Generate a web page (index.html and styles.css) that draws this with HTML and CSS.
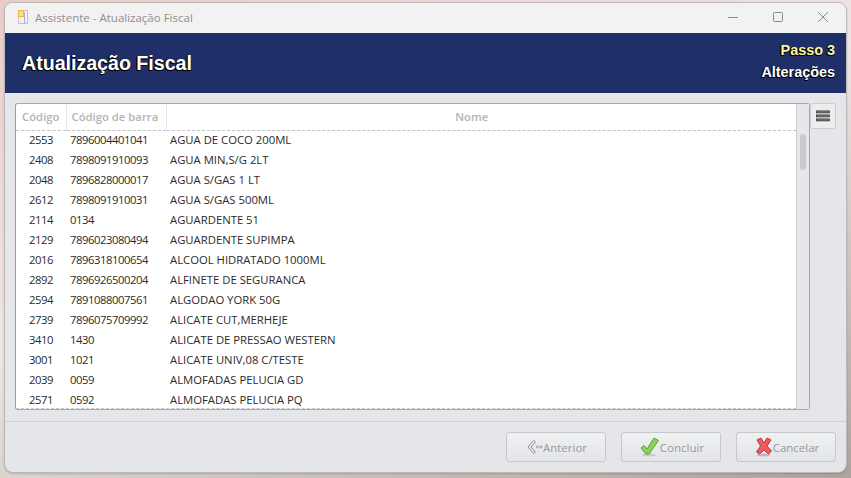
FILE: index.html
```html
<!DOCTYPE html>
<html lang="pt-BR">
<head>
    <meta charset="UTF-8">
    <meta name="viewport" content="width=device-width, initial-scale=1.0">
    <title>Assistente - Atualização Fiscal</title>
    <link rel="stylesheet" href="styles.css">
</head>
<body>
    <div class="window">
        <div class="titlebar">
            <svg class="app-icon" width="16" height="16" viewBox="0 0 16 16">
                <rect x="3.5" y="1.5" width="9" height="13" fill="#f3eef8" stroke="#c9bcdc"/>
                <rect x="3.5" y="1.5" width="5" height="6" fill="#fbe08a" stroke="#f0b92e"/>
                <rect x="9" y="3" width="1" height="11" fill="#b7a8d0"/>
            </svg>
            <span class="window-title">Assistente - Atualização Fiscal</span>
            <div class="window-controls">
                <svg width="12" height="12" viewBox="0 0 12 12"><path d="M1 6.5h10" stroke="#8a8a8a" fill="none"/></svg>
                <svg width="12" height="12" viewBox="0 0 12 12"><rect x="1.5" y="1.5" width="9" height="9" rx="1" stroke="#8a8a8a" fill="none"/></svg>
                <svg width="12" height="12" viewBox="0 0 12 12"><path d="M1 1l10 10M11 1L1 11" stroke="#8a8a8a" fill="none"/></svg>
            </div>
        </div>

        <div class="banner">
            <h1>Atualização Fiscal</h1>
            <div class="step">
                <div class="step-number">Passo 3</div>
                <div class="step-name">Alterações</div>
            </div>
        </div>

        <div class="content">
            <div class="grid-panel">
                <div class="grid-main">
                    <table class="grid">
                        <thead>
                            <tr>
                                <th class="col-code">Código</th>
                                <th class="col-bar">Código de barra</th>
                                <th class="col-name">Nome</th>
                            </tr>
                        </thead>
                        <tbody>
                            <tr><td class="col-code">2553</td><td class="col-bar">7896004401041</td><td>AGUA DE COCO 200ML</td></tr>
                            <tr><td class="col-code">2408</td><td class="col-bar">7898091910093</td><td>AGUA MIN,S/G 2LT</td></tr>
                            <tr><td class="col-code">2048</td><td class="col-bar">7896828000017</td><td>AGUA S/GAS 1 LT</td></tr>
                            <tr><td class="col-code">2612</td><td class="col-bar">7898091910031</td><td>AGUA S/GAS 500ML</td></tr>
                            <tr><td class="col-code">2114</td><td class="col-bar">0134</td><td>AGUARDENTE 51</td></tr>
                            <tr><td class="col-code">2129</td><td class="col-bar">7896023080494</td><td>AGUARDENTE SUPIMPA</td></tr>
                            <tr><td class="col-code">2016</td><td class="col-bar">7896318100654</td><td>ALCOOL HIDRATADO 1000ML</td></tr>
                            <tr><td class="col-code">2892</td><td class="col-bar">7896926500204</td><td>ALFINETE DE SEGURANCA</td></tr>
                            <tr><td class="col-code">2594</td><td class="col-bar">7891088007561</td><td>ALGODAO YORK 50G</td></tr>
                            <tr><td class="col-code">2739</td><td class="col-bar">7896075709992</td><td>ALICATE CUT,MERHEJE</td></tr>
                            <tr><td class="col-code">3410</td><td class="col-bar">1430</td><td>ALICATE DE PRESSAO WESTERN</td></tr>
                            <tr><td class="col-code">3001</td><td class="col-bar">1021</td><td>ALICATE UNIV,08 C/TESTE</td></tr>
                            <tr><td class="col-code">2039</td><td class="col-bar">0059</td><td>ALMOFADAS PELUCIA GD</td></tr>
                            <tr><td class="col-code">2571</td><td class="col-bar">0592</td><td>ALMOFADAS PELUCIA PQ</td></tr>
                        </tbody>
                    </table>
                </div>
                <div class="scrollbar"><div class="scroll-thumb"></div></div>
            </div>
            <button class="menu-btn" aria-label="Menu">
                <svg width="14" height="12" viewBox="0 0 14 12">
                    <rect x="0.4" y="0.9" width="13.2" height="2" fill="#7a7d80" stroke="#2e2e2e" stroke-width="0.7"/>
                    <rect x="0.4" y="4.9" width="13.2" height="2" fill="#7a7d80" stroke="#2e2e2e" stroke-width="0.7"/>
                    <rect x="0.4" y="8.9" width="13.2" height="2" fill="#7a7d80" stroke="#2e2e2e" stroke-width="0.7"/>
                </svg>
            </button>
        </div>

        <div class="footer">
            <button class="btn">
                <svg class="btn-icon" width="16" height="16" viewBox="0 0 16 16">
                    <path d="M6.500 1.500L1 8l5.500 6.500 2-1.500L4 8l4.500-5z" fill="none" stroke="#8c8f93" stroke-width="1"/>
                    <circle cx="10.500" cy="8" r="1.100" fill="none" stroke="#8c8f93" stroke-width="0.8"/>
                    <circle cx="14" cy="8" r="1.100" fill="none" stroke="#8c8f93" stroke-width="0.8"/>
                </svg>Anterior
            </button>
            <button class="btn">
                <svg class="btn-icon" width="20" height="20" viewBox="0 0 20 20">
                    <ellipse cx="9" cy="18" rx="7" ry="1.500" fill="#c8c8c8"/>
                    <path d="M1 11l3-2.500 3 3.500 7-11 4.500 2.500-9.500 13.500h-3z" fill="#8ed15a" stroke="#5c9e30" stroke-linejoin="round"/>
                </svg>Concluir
            </button>
            <button class="btn">
                <svg class="btn-icon" width="18" height="20" viewBox="0 0 18 20">
                    <ellipse cx="8.500" cy="18" rx="7" ry="1.500" fill="#c0b8b8"/>
                    <path d="M2 3l4-2 3 5 3-5 4 2-4 6 4.500 5-3 3-4.500-4-4.500 4-3-2 4-6z" fill="#ee5a60" stroke="#c3333a" stroke-linejoin="round"/>
                </svg>Cancelar
            </button>
        </div>
    </div>
</body>
</html>
```

FILE: styles.css
```css
html, body {
    height: 100%;
}

body {
    margin: 0;
    padding: 3px 5px 6px;
    box-sizing: border-box;
    overflow: hidden;
    background: linear-gradient(160deg, #e9cdc8 0%, #eee6e3 45%, #c9c3bc 75%, #aaa49c 100%);
    font-family: 'Open Sans', 'Noto Sans', sans-serif;
    font-size: 11.3px;
}

.window {
    height: 100%;
    display: flex;
    flex-direction: column;
    background-color: #e5e6ea;
    border-radius: 8px;
    overflow: hidden;
    box-shadow: 0 0 0 1px #bdb9b6, 0 1px 3px rgba(0, 0, 0, 0.35);
}

.titlebar {
    height: 30px;
    flex: none;
    display: flex;
    align-items: center;
    padding: 0 0 2px 10px;
    box-sizing: border-box;
    background-color: #f2f2f2;
    color: #8f8f8f;
    font-size: 11.5px;
}

.app-icon {
    margin-right: 4px;
}

.window-controls {
    margin-left: auto;
    display: flex;
    gap: 33px;
    padding-right: 17px;
}

.banner {
    height: 60px;
    flex: none;
    display: flex;
    justify-content: space-between;
    background-color: #1f2f68;
    color: #ffffff;
    font-family: 'Liberation Sans', Arial, sans-serif;
    font-weight: bold;
    text-shadow: -1px 0 0 #000000, -1px 1px 0 #000000, 0 1px 0 #000000;
}

.banner h1 {
    margin: 18px 0 0 17px;
    font-size: 19.6px;
    line-height: 24px;
}

.step {
    padding: 6px 11px 0 0;
    text-align: right;
    font-size: 14.4px;
    line-height: 22px;
}

.step-number {
    color: #fbf5a8;
}

.content {
    height: 328px;
    flex: none;
    display: flex;
    align-items: flex-start;
    padding: 10px 10px 0;
    box-sizing: border-box;
}

.grid-panel {
    width: 795px;
    height: 307px;
    flex: none;
    display: flex;
    box-sizing: border-box;
    border: 1px solid #a8a8a8;
    border-left-color: #9c9c9c;
    border-radius: 3px;
    background-color: #ffffff;
}

.grid-main {
    flex: 1;
    overflow: hidden;
    border-bottom: 1px dashed #c4c4c4;
    height: 304px;
}

.grid {
    width: 100%;
    border-collapse: collapse;
    table-layout: fixed;
    color: #2b2b2b;
}

.grid th {
    height: 26px;
    padding: 0 5px;
    box-sizing: border-box;
    text-align: left;
    color: #b4b4b4;
    font-weight: 600;
    border-right: 1px solid #e8e8e8;
    border-bottom: 1px dashed #c4c4c4;
}

.grid th.col-code {
    width: 50px;
    text-align: center;
}

.grid th.col-bar {
    width: 100px;
}

.grid th.col-name {
    text-align: center;
    padding-right: 24px;
    border-right: none;
}

.grid td {
    height: 20px;
    padding: 0 4px 2px;
    box-sizing: border-box;
    white-space: nowrap;
}

.grid td.col-code {
    text-align: center;
    letter-spacing: -0.4px;
}

.grid td.col-bar {
    letter-spacing: -0.45px;
}

.scrollbar {
    width: 13px;
    flex: none;
    background-color: #e6e7eb;
    border-left: 1px solid #d0d0d0;
    box-sizing: border-box;
    padding: 30px 0 0 3px;
}

.scroll-thumb {
    width: 6px;
    height: 36px;
    border-radius: 3px;
    background-color: #c8c9cc;
}

.menu-btn {
    width: 26px;
    height: 26px;
    padding: 0;
    display: flex;
    align-items: center;
    justify-content: center;
    background-color: #eceded;
    border: 1px solid #c9cbd0;
    border-radius: 3px;
}

.footer {
    flex: 1;
    display: flex;
    justify-content: flex-end;
    align-items: flex-start;
    gap: 15px;
    padding: 10px 10px 0 0;
    border-top: 1px solid #cfd0d4;
}

.btn {
    width: 100px;
    height: 30px;
    padding: 0 0 0 2px;
    display: flex;
    align-items: center;
    justify-content: center;
    background: linear-gradient(#f0f1f2, #e3e4e7);
    border: 1px solid #c6c8cc;
    border-radius: 3px;
    color: #96999e;
    font-family: inherit;
    font-size: 11.5px;
}

.btn-icon {
    flex: none;
}
```
